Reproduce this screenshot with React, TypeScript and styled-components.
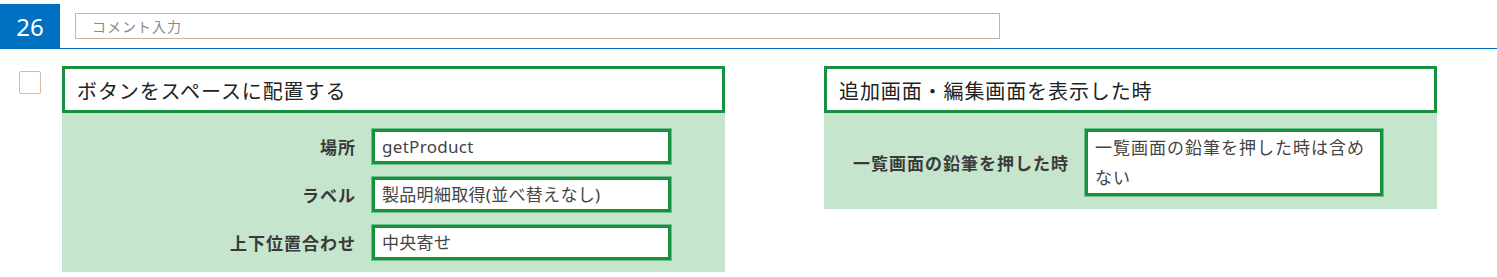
import React from 'react'
import styled, { createGlobalStyle } from 'styled-components'

const GlobalStyle = createGlobalStyle`
  body {
    margin: 0;
    background: #fff;
    font-family: "Noto Sans", "Noto Sans CJK JP", sans-serif;
  }
`

const Header = styled.div`
  display: flex;
  align-items: flex-start;
  height: 48px;
  border-bottom: 1px solid #0070c0;
`

const Number = styled.div`
  margin-top: 4px;
  width: 60px;
  height: 44px;
  background: #0070c0;
  color: #fff;
  font-size: 24px;
  display: flex;
  align-items: center;
  justify-content: center;
`

const CommentInput = styled.input`
  margin: 13px 0 0 15px;
  width: 925px;
  height: 26px;
  box-sizing: border-box;
  border: 1px solid #c8b39c;
  padding: 0 16px;
  font-family: "Noto Sans", "Noto Sans CJK JP", sans-serif;
  font-size: 14px;
  letter-spacing: 1px;
  outline: none;
  &::placeholder {
    color: #8a8a8a;
  }
`

const Content = styled.div`
  display: flex;
  align-items: flex-start;
  padding: 17px 0 0 19px;
`

const CheckBox = styled.div`
  margin-top: 5px;
  width: 22px;
  height: 23px;
  box-sizing: border-box;
  border: 1px solid #d2bda4;
  border-radius: 2px;
  margin-right: 21px;
`

const Cards = styled.div`
  display: flex;
  align-items: flex-start;
  gap: 99px;
`

const Card = styled.div<{ $width: number }>`
  width: ${p => p.$width}px;
`

const CardTitle = styled.div`
  height: 47px;
  box-sizing: border-box;
  border: 3px solid #17913f;
  padding: 2px 0 0 12px;
  display: flex;
  align-items: center;
  font-family: "Noto Sans CJK JP", sans-serif;
  font-size: 20px;
  letter-spacing: 0.9px;
  color: #222;
`

const CardBody = styled.div<{ $bottom: number }>`
  background: #c5e5cd;
  padding: 16px 0 ${p => p.$bottom}px 0;
  display: flex;
  flex-direction: column;
  gap: 13px;
`

const Row = styled.div<{ $label: number }>`
  display: grid;
  grid-template-columns: ${p => p.$label}px 1fr;
  column-gap: 16px;
  align-items: center;
  padding-right: 54px;
`

const Label = styled.div`
  text-align: right;
  font-family: "Noto Sans CJK JP", sans-serif;
  font-weight: 700;
  font-size: 17px;
  letter-spacing: 1px;
  color: #3a3a3a;
`

const Field = styled.div<{ $multi?: boolean }>`
  box-sizing: border-box;
  min-height: ${p => (p.$multi ? 64 : 35)}px;
  background: #fff;
  border: 3px solid #16923f;
  box-shadow: 0 0 0 1px #6fc08a;
  padding: ${p => (p.$multi ? '1px 6px 0 7px' : '0 7px')};
  display: flex;
  align-items: center;
  font-family: "Noto Sans", "Noto Sans CJK JP", sans-serif;
  font-size: 17px;
  letter-spacing: ${p => (p.$multi ? 1 : 0.3)}px;
  line-height: ${p => (p.$multi ? 30 : 29)}px;
  color: #444;
`

const leftRows = [
  { label: '場所', value: 'getProduct' },
  { label: 'ラベル', value: '製品明細取得(並べ替えなし)' },
  { label: '上下位置合わせ', value: '中央寄せ' },
]

export default function App() {
  return (
    <>
      <GlobalStyle />
      <Header>
        <Number>26</Number>
        <CommentInput placeholder="コメント入力" />
      </Header>
      <Content>
        <CheckBox />
        <Cards>
          <Card $width={663}>
            <CardTitle>ボタンをスペースに配置する</CardTitle>
            <CardBody $bottom={12}>
              {leftRows.map(r => (
                <Row key={r.label} $label={294}>
                  <Label>{r.label}</Label>
                  <Field>{r.value}</Field>
                </Row>
              ))}
            </CardBody>
          </Card>
          <Card $width={613}>
            <CardTitle>追加画面・編集画面を表示した時</CardTitle>
            <CardBody $bottom={13}>
              <Row $label={245}>
                <Label>一覧画面の鉛筆を押した時</Label>
                <Field $multi>一覧画面の鉛筆を押した時は含めない</Field>
              </Row>
            </CardBody>
          </Card>
        </Cards>
      </Content>
    </>
  )
}
